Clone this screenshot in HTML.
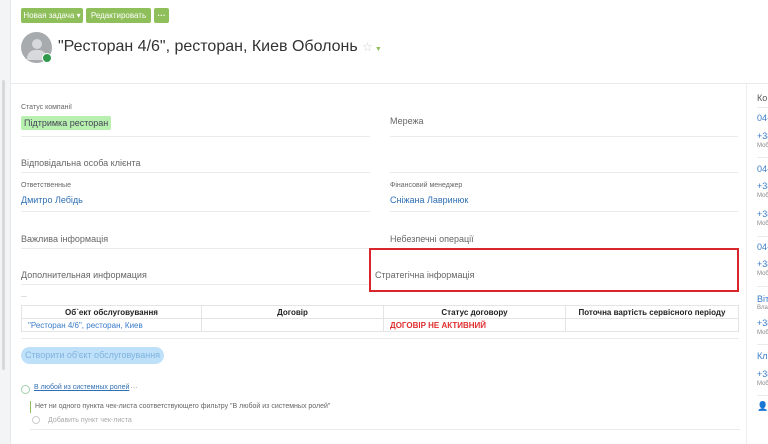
<!DOCTYPE html>
<html><head><meta charset="utf-8"><style>
*{margin:0;padding:0;box-sizing:border-box}
body{width:768px;height:444px;overflow:hidden;background:#fff;font-family:"Liberation Sans",sans-serif;position:relative;color:#333}
.a{position:absolute;white-space:nowrap}
.btn{position:absolute;top:8px;height:15px;background:#8fbf5a;color:#fff;font-size:8px;line-height:15px;border-radius:2px;text-align:center}
.lbl{font-size:7px;color:#666}
.val{font-size:9px;color:#666}
.link{color:#2f6fb5}
.hr{position:absolute;height:1px;background:#e8eaeb}
.rl{color:#3a7bc8;font-size:9px}
.rs{color:#888;font-size:6px}
table{border-collapse:collapse;position:absolute;left:21px;top:305px;width:718px;font-size:8px}
td,th{border:1px solid #e2e4e6;height:13px;padding:0 6px}
th{font-weight:bold;text-align:center;color:#222}
</style></head><body>
<div class="a" style="left:0;top:0;width:11px;height:444px;background:#f3f4f5;border-right:1px solid #e6e8ea"></div>
<div class="a" style="left:2px;top:80px;width:3px;height:290px;background:#d6d8da;border-radius:2px"></div>
<div class="btn" style="left:21px;width:62px">Новая задача ▾</div>
<div class="btn" style="left:86px;width:65px">Редактировать</div>
<div class="btn" style="left:154px;width:15px;font-weight:bold">···</div>
<div class="a" style="left:21px;top:32px;width:31px;height:31px;border-radius:50%;background:#a8abae;overflow:hidden">
<div style="position:absolute;left:11px;top:7px;width:10px;height:10px;border-radius:50%;background:#d7d9db"></div>
<div style="position:absolute;left:6px;top:18px;width:20px;height:10px;border-radius:10px 10px 2px 2px;background:#d7d9db"></div></div>
<div class="a" style="left:42px;top:53px;width:10px;height:10px;border-radius:50%;background:#2f9a4a;border:1.5px solid #fff"></div>
<div class="a" style="left:58px;top:38px;font-size:16px;color:#333">"Ресторан 4/6", ресторан, Киев Оболонь <span style="color:#ccc;font-size:12px">☆</span><span style="color:#8fbf5a;font-size:7px"> ▼</span></div>
<div class="hr" style="left:11px;top:83px;width:757px"></div>
<div class="a" style="left:746px;top:84px;width:1px;height:360px;background:#eceeef"></div>
<div class="a lbl" style="left:21px;top:104px">Статус компанії</div>
<div class="a" style="left:21px;top:116px;height:14px;padding:0 3px;background:#b8f0b0;border-radius:2px;font-size:9px;line-height:14px;color:#445">Підтримка ресторан</div>
<div class="hr" style="left:21px;top:136px;width:349px"></div>
<div class="a val" style="left:390px;top:116px">Мережа</div>
<div class="hr" style="left:390px;top:136px;width:348px"></div>
<div class="a val" style="left:21px;top:158px">Відповідальна особа клієнта</div>
<div class="hr" style="left:21px;top:172px;width:349px"></div>
<div class="hr" style="left:390px;top:172px;width:348px"></div>
<div class="a lbl" style="left:21px;top:182px">Ответственные</div>
<div class="a val link" style="left:21px;top:195px">Дмитро Лебідь</div>
<div class="a lbl" style="left:390px;top:182px">Фінансовий менеджер</div>
<div class="a val link" style="left:390px;top:195px">Сніжана Лавринюк</div>
<div class="hr" style="left:21px;top:211px;width:349px"></div>
<div class="hr" style="left:390px;top:211px;width:348px"></div>
<div class="a val" style="left:21px;top:234px">Важлива інформація</div>
<div class="a val" style="left:390px;top:234px">Небезпечні операції</div>
<div class="hr" style="left:21px;top:248px;width:349px"></div>
<div class="a val" style="left:21px;top:270px">Дополнительная информация</div>
<div class="a val" style="left:375px;top:270px">Стратегічна інформація</div>
<div class="hr" style="left:21px;top:284px;width:349px"></div>
<div class="a" style="left:369px;top:248px;width:370px;height:44px;border:2px solid #d9262c"></div>
<div class="a" style="left:21px;top:292px;font-size:7px;color:#888">...</div>
<table><tr><th style="width:180px">Об`ект обслуговування</th><th style="width:182px">Договір</th><th style="width:182px">Статус договору</th><th>Поточна вартість сервісного періоду</th></tr>
<tr><td class="link" style="color:#3a7bc8">"Ресторан 4/6", ресторан, Киев</td><td></td><td style="color:#e03030;font-weight:bold">ДОГОВІР НЕ АКТИВНИЙ</td><td></td></tr></table>
<div class="hr" style="left:21px;top:338px;width:718px"></div>
<div class="a" style="left:21px;top:347px;width:143px;height:17px;border-radius:9px;background:#bfe0f9;color:#7fb3e0;font-size:9px;line-height:17px;text-align:center">Створити об'єкт обслуговування</div>
<div class="a" style="left:21px;top:385px;width:9px;height:9px;border:1px solid #9fd0a9;border-radius:50%"></div>
<div class="a" style="left:34px;top:384px;font-size:7px;color:#2f6fb5;text-decoration:underline">В любой из системных ролей</div>
<div class="a" style="left:130px;top:383px;font-size:8px;color:#999">···</div>
<div class="a" style="left:30px;top:401px;width:1px;height:12px;background:#8fbf5a"></div>
<div class="a" style="left:35px;top:403px;font-size:7px;color:#666">Нет ни одного пункта чек-листа соответствующего фильтру "В любой из системных ролей"</div>
<div class="a" style="left:32px;top:416px;width:8px;height:8px;border:1px solid #ccc;border-radius:50%"></div>
<div class="a" style="left:48px;top:417px;font-size:7px;color:#aaa">Добавить пункт чек-листа</div>
<div class="hr" style="left:30px;top:429px;width:710px"></div>
<div class="a" style="left:757px;top:93px;font-size:9px;color:#555">Ко</div>
<div class="hr" style="left:757px;top:107px;width:11px"></div>
<div class="a rl" style="left:757px;top:113px">04-</div>
<div class="a rl" style="left:757px;top:131px">+38</div><div class="a rs" style="left:757px;top:143px">Моб</div>
<div class="hr" style="left:757px;top:157px;width:11px"></div>
<div class="a rl" style="left:757px;top:164px">04-</div>
<div class="a rl" style="left:757px;top:181px">+38</div><div class="a rs" style="left:757px;top:193px">Моб</div>
<div class="a rl" style="left:757px;top:209px">+38</div><div class="a rs" style="left:757px;top:221px">Моб</div>
<div class="hr" style="left:757px;top:236px;width:11px"></div>
<div class="a rl" style="left:757px;top:242px">04-</div>
<div class="a rl" style="left:757px;top:259px">+38</div><div class="a rs" style="left:757px;top:271px">Моб</div>
<div class="hr" style="left:757px;top:286px;width:11px"></div>
<div class="a rl" style="left:757px;top:294px">Віта</div><div class="a rs" style="left:757px;top:305px">Влас</div>
<div class="a rl" style="left:757px;top:318px">+38</div><div class="a rs" style="left:757px;top:330px">Моб</div>
<div class="hr" style="left:757px;top:344px;width:11px"></div>
<div class="a rl" style="left:757px;top:351px">Кли</div>
<div class="a rl" style="left:757px;top:369px">+38</div><div class="a rs" style="left:757px;top:381px">Моб</div>
<div class="hr" style="left:757px;top:395px;width:11px"></div>
<div class="a" style="left:757px;top:401px;font-size:9px;color:#aaa">👤</div>
</body></html>
